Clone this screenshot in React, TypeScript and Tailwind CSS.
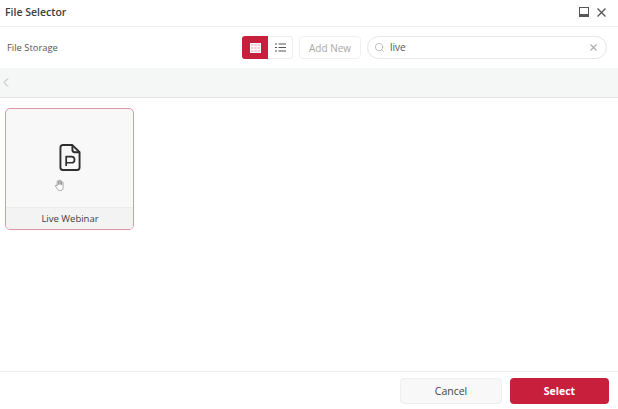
import React from "react";
import { Search } from "lucide-react";

const font = "font-['Open_Sans','Noto_Sans',sans-serif]";

export default function App() {
  return (
    <div className={`flex h-[409px] w-[618px] flex-col overflow-hidden bg-white ${font}`}>
      <header className="flex h-[27px] items-center justify-between border-b border-[#efefef] pl-[5px] pr-[12px]">
        <span className="pb-[1px] text-[10.5px] font-semibold text-[#3d3d3d]">File Selector</span>
        <div className="flex items-center gap-[8px] pb-[2px]">
          <svg width="10" height="10" viewBox="0 0 10 10" fill="none" aria-hidden="true">
            <rect x="0.5" y="0.5" width="9" height="9" stroke="#555" strokeWidth="1" />
            <rect x="0.5" y="7" width="9" height="2.5" fill="#555" />
          </svg>
          <svg width="9" height="9" viewBox="0 0 9 9" fill="none" stroke="#555" strokeWidth="1.3" aria-hidden="true">
            <path d="M0.5 0.5L8.5 8.5M8.5 0.5L0.5 8.5" />
          </svg>
        </div>
      </header>

      <div className="flex h-[41px] items-center pl-[7px] pr-[11px]">
        <span className="pt-[1px] text-[9.4px] font-medium text-[#555]">File Storage</span>
        <div className="ml-auto flex h-[23px] items-stretch">
          <button className="flex w-[26px] items-center justify-center rounded-l-[3px] bg-[#c8203c]">
            <svg width="11" height="10" viewBox="0 0 11 10" aria-hidden="true" fill="none" stroke="#fff" strokeWidth="1">
              <rect x="0.5" y="0.5" width="10" height="9" fill="#f6cdd4" />
              <path d="M3.8 0.5V9.5M7.2 0.5V9.5M0.5 3.5H10.5M0.5 6.5H10.5" />
            </svg>
          </button>
          <button className="flex w-[25px] items-center justify-center rounded-r-[3px] border border-l-0 border-[#eeeeee] bg-white">
            <svg width="11" height="9" viewBox="0 0 11 9" aria-hidden="true" fill="none" stroke="#555" strokeWidth="1.2">
              <path d="M0 1H2M3.5 1H11M0 4.5H2M3.5 4.5H11M0 8H2M3.5 8H11" />
            </svg>
          </button>
        </div>
        <button className="ml-[6px] flex h-[23px] w-[62px] items-center justify-center rounded-[4px] border border-[#f0f0f0] bg-white pt-[1px] text-[10px] text-[#a8a8a8]">
          Add New
        </button>
        <div className="ml-[6px] flex h-[23px] w-[240px] items-center rounded-full border border-[#e6e6e6] bg-white pl-[6px] pr-[9px]">
          <Search size={11} strokeWidth={1.3} className="text-[#9a9a9a]" />
          <span className="ml-[5px] text-[10px] font-medium text-[#555]">live</span>
          <svg width="7" height="7" viewBox="0 0 7 7" fill="none" stroke="#aaaaaa" strokeWidth="1.1" className="ml-auto" aria-hidden="true">
            <path d="M0.5 0.5L6.5 6.5M6.5 0.5L0.5 6.5" />
          </svg>
        </div>
      </div>

      <div className="flex h-[30px] items-center border-b border-[#e4e4e4] bg-[#f5f6f6] pl-[3px]">
        <svg width="6" height="9" viewBox="0 0 6 9" fill="none" stroke="#b5b5b5" strokeWidth="1" aria-hidden="true">
          <path d="M5 0.5L1 4.5L5 8.5" />
        </svg>
      </div>

      <main className="flex-1 pl-[5px] pt-[10px]">
        <div className="flex h-[122px] w-[129px] flex-col overflow-hidden rounded-[5px] border border-[#dc97a6] bg-[#f8f8f8]">
          <div className="relative flex flex-1 items-center justify-center pb-[2px] pl-[1px]">
            <svg width="22" height="29" viewBox="0 0 23 29" fill="none" stroke="#2f2f2f" strokeWidth="2" strokeLinejoin="round" aria-hidden="true">
              <path d="M4 1.5H14L21.5 9V25A2.5 2.5 0 0 1 19 27.5H4A2.5 2.5 0 0 1 1.5 25V4A2.5 2.5 0 0 1 4 1.5Z" />
              <path d="M14 1.5V6.5A2.5 2.5 0 0 0 16.5 9H21.5" />
              <path d="M7.5 23.5V13.5H13A3 3 0 0 1 13 20H7.5" strokeWidth="1.8" />
            </svg>
            <svg className="absolute left-[48px] top-[70px]" width="11" height="13" viewBox="0 0 12 13" fill="#fbfbfb" stroke="#8c8c8c" strokeWidth="0.8" strokeLinejoin="round" aria-hidden="true">
              <path d="M3.5 7V2.2a.8.8 0 0 1 1.6 0V5.5V1.5a.8.8 0 0 1 1.6 0V5.5V2a.8.8 0 0 1 1.6 0V5.8V3.4a.8.8 0 0 1 1.6 0V8.5C10.3 10.8 9 12 7 12C5 12 4.2 11.2 3.2 9.6L1.6 7.2C1.2 6.4 2.2 5.6 2.9 6.3Z" />
            </svg>
          </div>
          <div className="flex h-[22px] items-center justify-center border-t border-[#ececec] bg-[#f3f3f3] pl-[1px] pt-[1px] text-[9.5px] font-medium text-[#404040]">
            Live Webinar
          </div>
        </div>
      </main>

      <footer className="flex h-[38px] items-start justify-end gap-[8px] border-t border-[#ececec] pr-[9px] pt-[6px]">
        <button className="flex h-[26px] w-[102px] items-center justify-center rounded-[4px] border border-[#eeeeee] bg-[#f8f8f8] pt-[1px] text-[10.5px] text-[#444]">
          Cancel
        </button>
        <button className="flex h-[26px] w-[99px] items-center justify-center rounded-[4px] bg-[#c8203c] pt-[1px] text-[10.5px] font-bold text-white">
          Select
        </button>
      </footer>
    </div>
  );
}
